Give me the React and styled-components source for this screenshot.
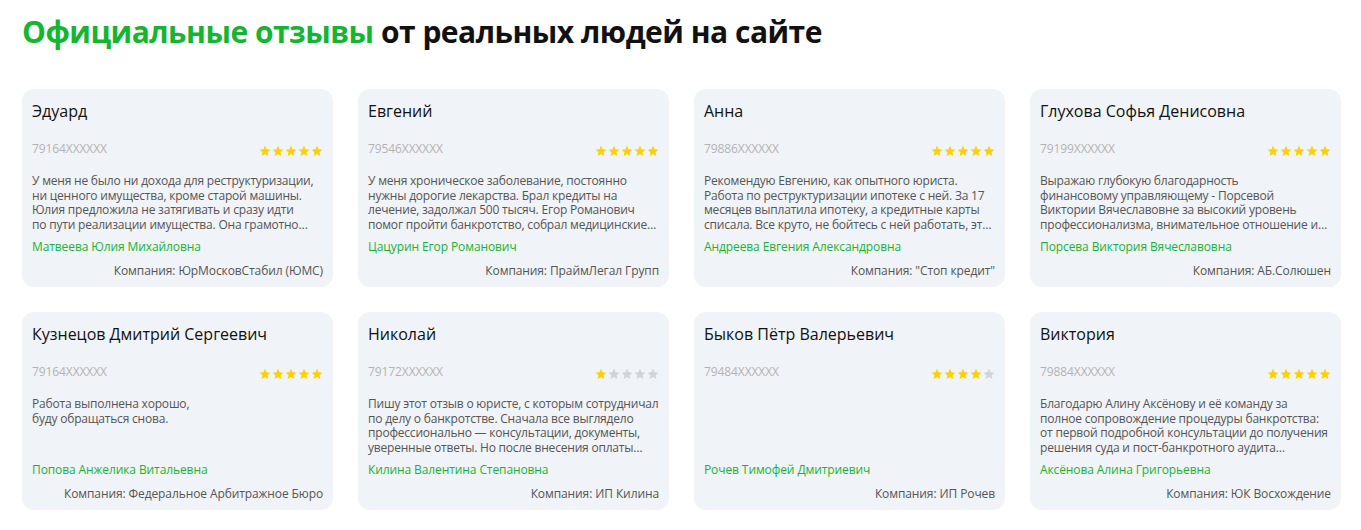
import styled, { createGlobalStyle } from "styled-components";

const GlobalStyle = createGlobalStyle`
  * {
    box-sizing: border-box;
  }
  body {
    margin: 0;
    background: #ffffff;
    font-family: "Open Sans", "Noto Sans", sans-serif;
  }
`;

const Page = styled.div`
  padding: 14px 20px 20px 22px;
`;

const Title = styled.h2`
  margin: 0 0 39px;
  font-size: 30px;
  line-height: 36px;
  font-weight: 700;
  color: #111111;
  letter-spacing: -0.5px;
`;

const Accent = styled.span`
  color: #14b531;
`;

const Grid = styled.div`
  display: grid;
  grid-template-columns: repeat(4, 1fr);
  gap: 25px;
`;

const Card = styled.div`
  background: #f0f3f8;
  border-radius: 12px;
  padding: 10px;
  height: 198px;
  display: flex;
  flex-direction: column;
`;

const Name = styled.div`
  font-size: 16px;
  line-height: 24px;
  color: #111111;
`;

const MetaRow = styled.div`
  margin-top: 19px;
  height: 14px;
  display: flex;
  align-items: center;
  justify-content: space-between;
`;

const Phone = styled.span`
  font-size: 12px;
  line-height: 14px;
  color: #b3b3b3;
  letter-spacing: -0.1px;
`;

const Stars = styled.div`
  display: flex;
  gap: 1px;
  margin-top: 3px;
`;

const Text = styled.div`
  margin-top: 18px;
  min-height: 58px;
  font-size: 12px;
  line-height: 14.5px;
  letter-spacing: -0.2px;
  color: #555555;
  white-space: pre-line;
`;

const Lawyer = styled.div`
  margin-top: 8px;
  font-size: 12px;
  line-height: 14px;
  letter-spacing: -0.1px;
  color: #17b532;
`;

const Company = styled.div`
  margin-top: 10px;
  font-size: 12px;
  line-height: 14px;
  letter-spacing: -0.1px;
  color: #555555;
  text-align: right;
`;

const Star = ({ filled }) => (
  <svg width="12" height="12" viewBox="0 0 24 24">
    <path
      d="M12 1.5l3.2 7 7.6.8-5.7 5.1 1.6 7.5L12 18l-6.7 3.9 1.6-7.5L1.2 9.3l7.6-.8z"
      fill={filled ? "#ffd000" : "#d0d3d8"}
    />
  </svg>
);

const reviews = [
  {
    name: "Эдуард",
    phone: "79164XXXXXX",
    rating: 5,
    text: "У меня не было ни дохода для реструктуризации,\nни ценного имущества, кроме старой машины.\nЮлия предложила не затягивать и сразу идти\nпо пути реализации имущества. Она грамотно…",
    lawyer: "Матвеева Юлия Михайловна",
    company: "ЮрМосковСтабил (ЮМС)",
  },
  {
    name: "Евгений",
    phone: "79546XXXXXX",
    rating: 5,
    text: "У меня хроническое заболевание, постоянно\nнужны дорогие лекарства. Брал кредиты на\nлечение, задолжал 500 тысяч. Егор Романович\nпомог пройти банкротство, собрал медицинские…",
    lawyer: "Цацурин Егор Романович",
    company: "ПраймЛегал Групп",
  },
  {
    name: "Анна",
    phone: "79886XXXXXX",
    rating: 5,
    text: "Рекомендую Евгению, как опытного юриста.\nРабота по реструктуризации ипотеке с ней. За 17\nмесяцев выплатила ипотеку, а кредитные карты\nсписала. Все круто, не бойтесь с ней работать, эт…",
    lawyer: "Андреева Евгения Александровна",
    company: '"Стоп кредит"',
  },
  {
    name: "Глухова Софья Денисовна",
    phone: "79199XXXXXX",
    rating: 5,
    text: "Выражаю глубокую благодарность\nфинансовому управляющему - Порсевой\nВиктории Вячеславовне за высокий уровень\nпрофессионализма, внимательное отношение и…",
    lawyer: "Порсева Виктория Вячеславовна",
    company: "АБ.Солюшен",
  },
  {
    name: "Кузнецов Дмитрий Сергеевич",
    phone: "79164XXXXXX",
    rating: 5,
    text: "Работа выполнена хорошо,\nбуду обращаться снова.",
    lawyer: "Попова Анжелика Витальевна",
    company: "Федеральное Арбитражное Бюро",
  },
  {
    name: "Николай",
    phone: "79172XXXXXX",
    rating: 1,
    text: "Пишу этот отзыв о юристе, с которым сотрудничал\nпо делу о банкротстве. Сначала все выглядело\nпрофессионально — консультации, документы,\nуверенные ответы. Но после внесения оплаты…",
    lawyer: "Килина Валентина Степановна",
    company: "ИП Килина",
  },
  {
    name: "Быков Пётр Валерьевич",
    phone: "79484XXXXXX",
    rating: 4,
    text: "",
    lawyer: "Рочев Тимофей Дмитриевич",
    company: "ИП Рочев",
  },
  {
    name: "Виктория",
    phone: "79884XXXXXX",
    rating: 5,
    text: "Благодарю Алину Аксёнову и её команду за\nполное сопровождение процедуры банкротства:\nот первой подробной консультации до получения\nрешения суда и пост-банкротного аудита…",
    lawyer: "Аксёнова Алина Григорьевна",
    company: "ЮК Восхождение",
  },
];

const ReviewCard = ({ review }) => (
  <Card>
    <Name>{review.name}</Name>
    <MetaRow>
      <Phone>{review.phone}</Phone>
      <Stars>
        {[1, 2, 3, 4, 5].map((i) => (
          <Star key={i} filled={i <= review.rating} />
        ))}
      </Stars>
    </MetaRow>
    <Text>{review.text}</Text>
    <Lawyer>{review.lawyer}</Lawyer>
    <Company>Компания: {review.company}</Company>
  </Card>
);

const App = () => (
  <Page>
    <GlobalStyle />
    <Title>
      <Accent>Официальные отзывы</Accent> от реальных людей на сайте
    </Title>
    <Grid>
      {reviews.map((review) => (
        <ReviewCard key={review.phone + review.name} review={review} />
      ))}
    </Grid>
  </Page>
);

export default App;
